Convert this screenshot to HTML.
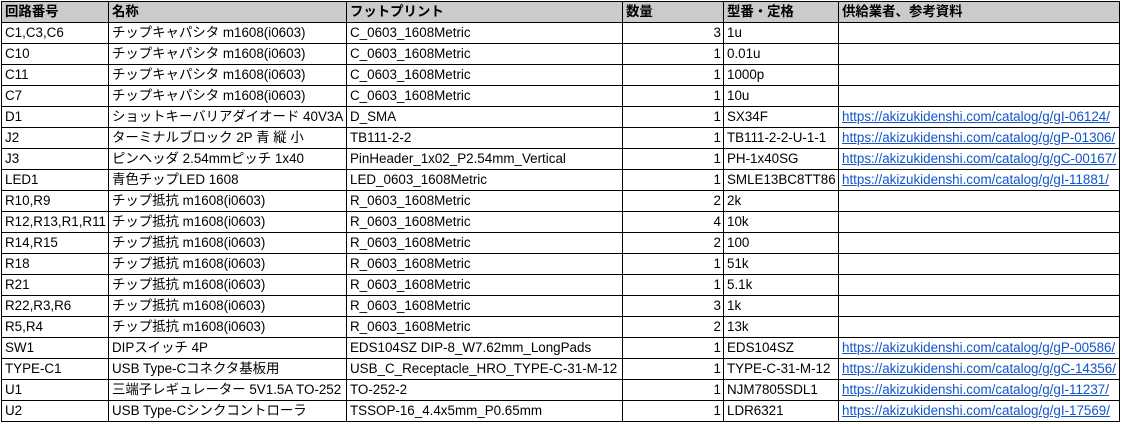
<!DOCTYPE html>
<html><head><meta charset="utf-8"><style>
body{margin:0;background:#fff;}
table{position:absolute;left:1px;top:1px;width:1118px;border-collapse:collapse;font-family:"Liberation Sans","Noto Sans CJK JP",sans-serif;font-size:13.4px;color:#000;table-layout:fixed;}
td,th{border:1px solid #000;height:20px;padding:0 2px 0 3px;white-space:nowrap;overflow:hidden;text-align:left;line-height:20px;}
th{background:#cbcbcb;font-weight:bold;}
td.n{text-align:right;}
a{color:#1155cc;text-decoration:underline;}
</style></head><body>
<table>
<colgroup><col style="width:107px"><col style="width:238px"><col style="width:276px"><col style="width:101px"><col style="width:115px"><col style="width:281px"></colgroup>
<tr><th>回路番号</th><th>名称</th><th>フットプリント</th><th>数量</th><th>型番・定格</th><th>供給業者、参考資料</th></tr>
<tr><td>C1,C3,C6</td><td>チップキャパシタ m1608(i0603)</td><td>C_0603_1608Metric</td><td class="n">3</td><td>1u</td><td></td></tr>
<tr><td>C10</td><td>チップキャパシタ m1608(i0603)</td><td>C_0603_1608Metric</td><td class="n">1</td><td>0.01u</td><td></td></tr>
<tr><td>C11</td><td>チップキャパシタ m1608(i0603)</td><td>C_0603_1608Metric</td><td class="n">1</td><td>1000p</td><td></td></tr>
<tr><td>C7</td><td>チップキャパシタ m1608(i0603)</td><td>C_0603_1608Metric</td><td class="n">1</td><td>10u</td><td></td></tr>
<tr><td>D1</td><td>ショットキーバリアダイオード 40V3A</td><td>D_SMA</td><td class="n">1</td><td>SX34F</td><td><a>https://akizukidenshi.com/catalog/g/gI-06124/</a></td></tr>
<tr><td>J2</td><td>ターミナルブロック 2P 青 縦 小</td><td>TB111-2-2</td><td class="n">1</td><td>TB111-2-2-U-1-1</td><td><a>https://akizukidenshi.com/catalog/g/gP-01306/</a></td></tr>
<tr><td>J3</td><td>ピンヘッダ 2.54mmピッチ 1x40</td><td>PinHeader_1x02_P2.54mm_Vertical</td><td class="n">1</td><td>PH-1x40SG</td><td><a>https://akizukidenshi.com/catalog/g/gC-00167/</a></td></tr>
<tr><td>LED1</td><td>青色チップLED 1608</td><td>LED_0603_1608Metric</td><td class="n">1</td><td>SMLE13BC8TT86</td><td><a>https://akizukidenshi.com/catalog/g/gI-11881/</a></td></tr>
<tr><td>R10,R9</td><td>チップ抵抗 m1608(i0603)</td><td>R_0603_1608Metric</td><td class="n">2</td><td>2k</td><td></td></tr>
<tr><td>R12,R13,R1,R11</td><td>チップ抵抗 m1608(i0603)</td><td>R_0603_1608Metric</td><td class="n">4</td><td>10k</td><td></td></tr>
<tr><td>R14,R15</td><td>チップ抵抗 m1608(i0603)</td><td>R_0603_1608Metric</td><td class="n">2</td><td>100</td><td></td></tr>
<tr><td>R18</td><td>チップ抵抗 m1608(i0603)</td><td>R_0603_1608Metric</td><td class="n">1</td><td>51k</td><td></td></tr>
<tr><td>R21</td><td>チップ抵抗 m1608(i0603)</td><td>R_0603_1608Metric</td><td class="n">1</td><td>5.1k</td><td></td></tr>
<tr><td>R22,R3,R6</td><td>チップ抵抗 m1608(i0603)</td><td>R_0603_1608Metric</td><td class="n">3</td><td>1k</td><td></td></tr>
<tr><td>R5,R4</td><td>チップ抵抗 m1608(i0603)</td><td>R_0603_1608Metric</td><td class="n">2</td><td>13k</td><td></td></tr>
<tr><td>SW1</td><td>DIPスイッチ 4P</td><td>EDS104SZ DIP-8_W7.62mm_LongPads</td><td class="n">1</td><td>EDS104SZ</td><td><a>https://akizukidenshi.com/catalog/g/gP-00586/</a></td></tr>
<tr><td>TYPE-C1</td><td>USB Type-Cコネクタ基板用</td><td>USB_C_Receptacle_HRO_TYPE-C-31-M-12</td><td class="n">1</td><td>TYPE-C-31-M-12</td><td><a>https://akizukidenshi.com/catalog/g/gC-14356/</a></td></tr>
<tr><td>U1</td><td>三端子レギュレーター 5V1.5A TO-252</td><td>TO-252-2</td><td class="n">1</td><td>NJM7805SDL1</td><td><a>https://akizukidenshi.com/catalog/g/gI-11237/</a></td></tr>
<tr><td>U2</td><td>USB Type-Cシンクコントローラ</td><td>TSSOP-16_4.4x5mm_P0.65mm</td><td class="n">1</td><td>LDR6321</td><td><a>https://akizukidenshi.com/catalog/g/gI-17569/</a></td></tr>
</table>
</body></html>
